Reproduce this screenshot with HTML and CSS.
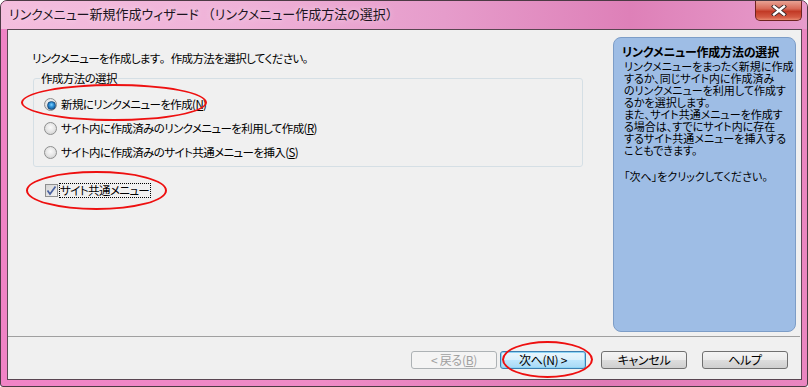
FILE: index.html
```html
<!DOCTYPE html>
<html lang="ja">
<head>
<meta charset="utf-8">
<link rel="stylesheet" href="styles.css">
</head>
<body>
<div class="window">
  <div class="titlebar">
    <span class="title">リンクメニュー新規作成ウィザード <span class="fw">（</span>リンクメニュー作成方法の選択<span class="fw">）</span></span>
    <span class="close"><svg width="16" height="11" viewBox="0 0 16 11"><path d="M3 1.5 L13 9.5 M13 1.5 L3 9.5" stroke="#3c2a2a" stroke-width="4.2" stroke-linecap="square"/><path d="M3 1.5 L13 9.5 M13 1.5 L3 9.5" stroke="#ffffff" stroke-width="2.4" stroke-linecap="square"/></svg></span>
  </div>
  <div class="client">
    <div class="main">
      <div class="left">
        <p class="intro">リンクメニューを作成します<span class="fw">。</span>作成方法を選択してください。</p>
        <fieldset class="group">
          <legend>作成方法の選択</legend>
          <div class="radio"><span class="rb on"></span>新規にリンクメニューを作成(<u>N</u>)</div>
          <div class="radio"><span class="rb"></span>サイト内に作成済みのリンクメニューを利用して作成(<u>R</u>)</div>
          <div class="radio"><span class="rb"></span>サイト内に作成済みのサイト共通メニューを挿入(<u>S</u>)</div>
        </fieldset>
        <div class="check"><span class="cb"><svg width="11" height="11" viewBox="0 0 11 11"><path d="M1.5 5.5 L4 9 L9.5 1.5" fill="none" stroke="#4a62a0" stroke-width="1.7"/></svg></span><span class="focus">サイト共通メニュー</span></div>
      </div>
      <aside class="help">
        <div class="help-title">リンクメニュー作成方法の選択</div>
        <div class="help-body">
          <div>リンクメニューをまったく新規に作成</div>
          <div>するか、同じサイト内に作成済み</div>
          <div>のリンクメニューを利用して作成す</div>
          <div>るかを選択します。</div>
          <div>また、サイト共通メニューを作成す</div>
          <div>る場合は、すでにサイト内に存在</div>
          <div>するサイト共通メニューを挿入する</div>
          <div>こともできます。</div>
          <div class="blank">&nbsp;</div>
          <div>「次へ」をクリックしてください。</div>
        </div>
      </aside>
    </div>
    <div class="sep"></div>
    <div class="buttons">
      <span class="btn disabled">&lt; 戻る(<u>B</u>)</span>
      <span class="btn default">次へ(N) &gt;</span>
      <span class="btn gap">キャンセル</span>
      <span class="btn gap">ヘルプ</span>
    </div>
  </div>
  <span class="mark m1"></span>
  <span class="mark m2"></span>
  <span class="mark m3"></span>
</div>
</body>
</html>
```

FILE: styles.css
```css
* { box-sizing: border-box; }
html, body { margin: 0; padding: 0; background: #ffffff; }
body {
  font-family: "Noto Sans CJK JP", "Noto Sans", sans-serif;
  font-feature-settings: "palt";
  font-size: 11.5px;
  letter-spacing: -0.6px;
  color: #000;
}
.window {
  position: relative;
  width: 808px;
  height: 387px;
  border: 1px solid #4c3a44;
  border-radius: 7px 7px 3px 3px;
  background: linear-gradient(to right, #f084c6 0%, #ee8cc6 40%, #e07ab6 75%, #ea86c0 100%);
  padding: 0 5px 6px 6px;
  display: flex;
  flex-direction: column;
  overflow: hidden;
}
.titlebar {
  height: 28px;
  margin: 0 -5px 0 -6px;
  padding: 0 5px 0 6px;
  display: flex;
  align-items: flex-start;
  background: linear-gradient(to right, #f4bede 0%, #efb2d8 30%, #e69ccb 55%, #de80b8 78%, #e79ccb 100%);
}
.title {
  margin: 5px 0 0 2px;
  font-size: 13px;
  letter-spacing: 0;
  line-height: 16px;
  color: #1c1420;
  text-shadow: 0 0 6px rgba(255,255,255,0.6);
  white-space: nowrap;
}
.fw { font-feature-settings: normal; }
.close {
  margin-left: auto;
  width: 47px;
  height: 20px;
  border: 1px solid #6e2420;
  border-top: none;
  border-radius: 0 0 5px 5px;
  background: linear-gradient(to bottom, #e8a294 0%, #d86a58 40%, #c23a26 55%, #d45a44 85%, #e88a70 100%);
  display: flex;
  align-items: center;
  justify-content: center;
}
.client {
  flex: 1;
  border: 1px solid #5a4652;
  background: #f0f0f0;
  display: flex;
  flex-direction: column;
}
.main {
  height: 306px;
  display: flex;
}
.left {
  flex: 1;
  padding: 20px 0 0 24px;
}
.intro {
  margin: 0;
  line-height: 16px;
  white-space: nowrap;
}
.group {
  margin: 4px 0 0 1px;
  width: 550px;
  border: 1px solid #d5dfe5;
  border-radius: 3px;
  padding: 6px 0 2px 10px;
}
.group legend {
  margin-left: -4px;
  padding: 0 1px;
  line-height: 16px;
}
.radio {
  height: 24px;
  display: flex;
  align-items: center;
  white-space: nowrap;
}
.rb {
  width: 13px;
  height: 13px;
  border-radius: 50%;
  border: 1px solid #8e8f8f;
  background: radial-gradient(circle at 50% 40%, #fafafa 0%, #e8e8e8 45%, #c9c9c9 100%);
  margin-right: 4px;
  flex: none;
  position: relative;
}
.rb.on::after {
  content: "";
  position: absolute;
  left: 2px;
  top: 2px;
  width: 7px;
  height: 7px;
  border-radius: 50%;
  background: radial-gradient(circle at 50% 40%, #7fd0ff 0%, #2c8fd6 40%, #0e4a8a 100%);
  border: 1px solid #1a4f80;
}
.check {
  margin: 15px 0 0 13px;
  height: 16px;
  display: flex;
  align-items: center;
  white-space: nowrap;
}
.cb {
  width: 13px;
  height: 13px;
  border: 1px solid #8e8f8f;
  background: linear-gradient(135deg, #d4d4d4, #f2f2f2);
  display: flex;
  align-items: center;
  justify-content: center;
  flex: none;
  margin-right: 1px;
}
.focus {
  outline: 1px dotted #000;
  outline-offset: -1px;
  padding: 0 2px 0 1px;
  line-height: 15px;
}
.help {
  width: 183px;
  margin: 7px 5px 4px 0;
  border: 1px solid #7d9dc7;
  border-radius: 8px;
  background: #9ebde5;
  padding: 7px 0 0 8px;
  letter-spacing: 0;
}
.help-title {
  font-weight: bold;
  font-size: 12px;
  line-height: 14px;
  letter-spacing: -0.2px;
  white-space: nowrap;
}
.help-body {
  margin-top: 1px;
  padding-left: 2px;
  font-size: 11px;
  line-height: 12px;
  white-space: nowrap;
}
.help-body div { height: 12px; }
.help-body div.blank { height: 14px; }
.sep {
  height: 1px;
  background: #a0a0a0;
  margin: 0 1px 0 0;
}
.buttons {
  flex: 1;
  display: flex;
  justify-content: flex-end;
  align-items: flex-start;
  padding: 14px 13px 0 0;
}
.btn {
  width: 86px;
  height: 18px;
  border: 1px solid #707070;
  border-radius: 3px;
  background: linear-gradient(to bottom, #f4f4f4 0%, #ebebeb 50%, #dddddd 51%, #cfcfcf 100%);
  display: flex;
  align-items: center;
  justify-content: center;
  font-size: 12px;
  letter-spacing: -0.3px;
  line-height: 16px;
  white-space: nowrap;
}
.btn.disabled {
  border-color: #adb2b5;
  background: #f4f4f4;
  color: #a0a0a0;
}
.btn.default {
  margin-left: 3px;
  border-color: #3c7fb1;
  box-shadow: inset 0 0 0 1px #8fd5f5;
  background: linear-gradient(to bottom, #eaf6fd 0%, #d9f0fc 50%, #bee6fd 51%, #a7d9f5 100%);
}
.btn.gap { margin-left: 15px; }
.mark {
  position: absolute;
  border: 2px solid #ee1010;
  border-radius: 50%;
}
.m1 { left: 20px; top: 83px; width: 186px; height: 37px; }
.m2 { left: 25px; top: 170px; width: 141px; height: 39px; }
.m3 { left: 501px; top: 340px; width: 91px; height: 37px; }
```
